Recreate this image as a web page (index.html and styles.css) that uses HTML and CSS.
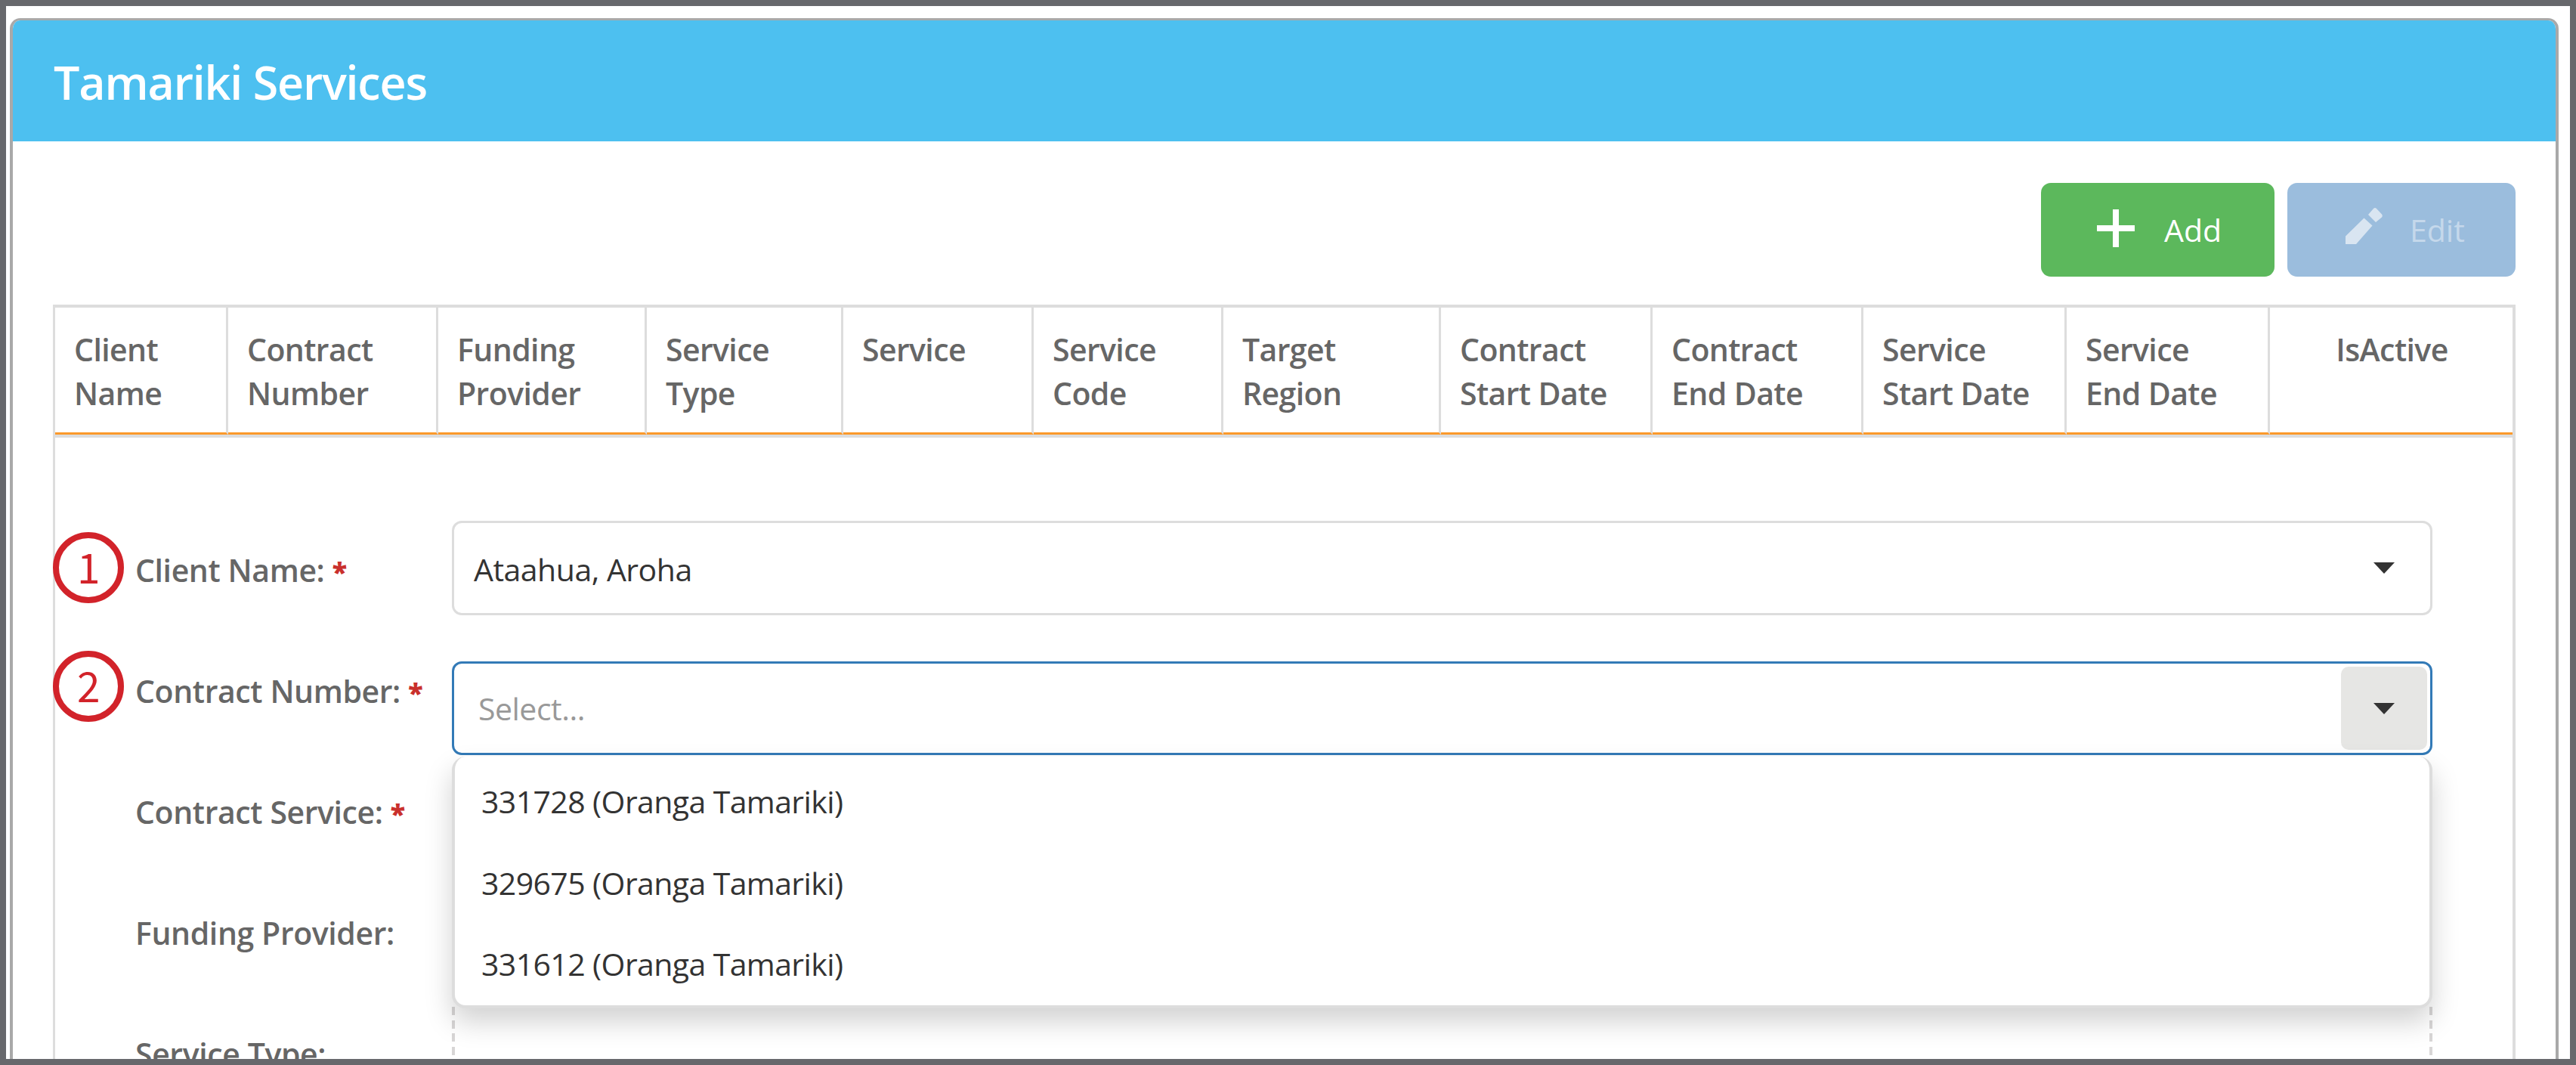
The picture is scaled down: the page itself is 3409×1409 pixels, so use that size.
FILE: index.html
```
<!DOCTYPE html>
<html lang="en">

<head>
    <meta charset="UTF-8">
    <meta name="viewport" content="width=device-width, initial-scale=1.0">
    <title>Tamariki Services</title>
    <link rel="stylesheet" href="styles.css">
</head>

<body>
    <section class="panel">
        <h1 class="panelTitle">Tamariki Services</h1>
        <div class="toolbar">
            <button class="btn addBtn">
                <svg width="50" height="50" viewBox="0 0 50 50">
                    <path d="M21 0h8v21h21v8H29v21h-8V29H0v-8h21z" fill="#fff" />
                </svg>
                <span>Add</span>
            </button>
            <button class="btn editBtn" disabled>
                <svg width="49" height="48" viewBox="0 0 49 48">
                    <path d="M0 48V37.5L24.5 13.5 35.5 23.5 14 48zM30 9l7-8q2-2 4 0l7 7.500q1.500 2 0 4L40 19z" fill="#d9e5f1" />
                </svg>
                <span>Edit</span>
            </button>
        </div>
        <div class="grid">
            <div class="gridHeader">
                <div class="gridCell">Client<br>Name</div>
                <div class="gridCell">Contract<br>Number</div>
                <div class="gridCell">Funding<br>Provider</div>
                <div class="gridCell">Service<br>Type</div>
                <div class="gridCell">Service</div>
                <div class="gridCell">Service<br>Code</div>
                <div class="gridCell">Target<br>Region</div>
                <div class="gridCell">Contract<br>Start Date</div>
                <div class="gridCell">Contract<br>End Date</div>
                <div class="gridCell">Service<br>Start Date</div>
                <div class="gridCell">Service<br>End Date</div>
                <div class="gridCell centered">IsActive</div>
            </div>
            <div class="form">
                <div class="labels">
                    <label><span class="step">1</span>Client Name: <b>*</b></label>
                    <label><span class="step stepTwo">2</span>Contract Number: <b>*</b></label>
                    <label>Contract Service: <b>*</b></label>
                    <label>Funding Provider:</label>
                    <label>Service Type:</label>
                </div>
                <div class="fields">
                    <div class="combo">
                        <span>Ataahua, Aroha</span>
                        <div class="comboBtn"><i class="caret"></i></div>
                    </div>
                    <div class="combo active">
                        <span class="placeholder">Select...</span>
                        <div class="comboBtn"><i class="caret"></i></div>
                        <ul class="dropdown">
                            <li>331728 (Oranga Tamariki)</li>
                            <li>329675 (Oranga Tamariki)</li>
                            <li>331612 (Oranga Tamariki)</li>
                        </ul>
                    </div>
                    <div class="readonlyBox"></div>
                </div>
            </div>
        </div>
    </section>
</body>

</html>
```
FILE: styles.css
```
* {
    margin: 0;
    padding: 0;
    box-sizing: border-box;
}

html {
    overflow: hidden;
}

body {
    height: 1409px;
    border: 8px solid #67686c;
    padding: 16px 15px 0 5px;
    overflow: hidden;
    background: #fff;
    color: #666;
    font-family: "Open Sans", "Noto Sans", sans-serif;
    font-size: 41px;
    letter-spacing: -.5px;
}

.panel {
    height: 1377px;
    border: 4px solid #a9a9a9;
    border-top-width: 3px;
    border-bottom: none;
    border-radius: 14px 14px 0 0;
    overflow: hidden;
}

.panelTitle {
    height: 160px;
    padding: 3px 0 0 54px;
    background: #4dc0f0;
    color: #fff;
    font-size: 61px;
    font-weight: 600;
    line-height: 158px;
    letter-spacing: -1.2px;
}

.toolbar {
    display: flex;
    justify-content: flex-end;
    gap: 17px;
    padding: 55px 53px 37px 0;
}

.btn {
    height: 124px;
    display: flex;
    align-items: center;
    border: none;
    border-radius: 13px;
    font: inherit;
    letter-spacing: 0;
}

.addBtn {
    width: 309px;
    padding-left: 74px;
    gap: 39px;
    background: #5cb85c;
    color: #fff;
}

.addBtn svg {
    margin-bottom: 4px;
}

.editBtn {
    width: 302px;
    padding-left: 77px;
    gap: 36px;
    background: #9bbddd;
    color: #c5d8eb;
}

.editBtn svg {
    margin-bottom: 10px;
}

.grid {
    height: 1000px;
    margin: 0 53px;
    border: 4px solid #ddd;
    border-left-width: 3px;
    border-bottom: none;
}

.gridHeader {
    height: 172px;
    display: grid;
    grid-template-columns: 229px 278px 276px 260px 252px 251px 288px 280px 279px 269px 269px 1fr;
    border-bottom: 4px solid #ddd;
    font-weight: 600;
    line-height: 58px;
    letter-spacing: -.6px;
}

.gridCell {
    padding: 26px 0 0 25px;
    border-right: 3px solid #ddd;
    border-bottom: 3px solid #fb992b;
}

.gridCell.centered {
    padding-left: 2px;
    border-right: none;
    text-align: center;
}

.form {
    display: flex;
    padding: 0 106px 0 105px;
}

.labels {
    width: 420px;
    padding: 95px 0 0 1px;
    font-weight: 600;
}

.labels label {
    display: block;
    position: relative;
    height: 160px;
    line-height: 160px;
    letter-spacing: -.4px;
    white-space: nowrap;
}

.labels b {
    color: #c9302c;
    font-size: 36px;
    line-height: 1;
}

.step {
    position: absolute;
    left: -109px;
    top: 30px;
    width: 94px;
    height: 94px;
    border: 8px solid #d2232a;
    border-radius: 50%;
    color: #d2232a;
    font-family: "Noto Sans CJK SC", sans-serif;
    font-size: 55px;
    font-weight: 400;
    line-height: 72px;
    text-align: center;
}

.stepTwo {
    top: 27px;
}

.fields {
    flex: 1;
    padding-top: 110px;
}

.combo {
    position: relative;
    height: 125px;
    display: flex;
    justify-content: space-between;
    align-items: center;
    padding: 0 4px 0 26px;
    border: 3px solid #ddd;
    border-radius: 13px;
    color: #333;
}

.combo > span {
    padding-top: 3px;
}

.combo.active {
    height: 124px;
    margin-top: 61px;
    padding-left: 32px;
    border-color: #337ab7;
}

.combo .placeholder {
    padding-top: 0;
    color: #999;
}

.comboBtn {
    width: 114px;
    height: 110px;
    display: flex;
    justify-content: center;
    align-items: center;
    border-radius: 10px;
}

.active .comboBtn {
    background: #e6e6e4;
}

.caret {
    border: 14px solid transparent;
    border-top: 15px solid #333;
    border-bottom: none;
}

.dropdown {
    position: absolute;
    left: -3px;
    right: -3px;
    top: 123px;
    height: 333px;
    padding-top: 6px;
    border: 4px solid #ddd;
    border-top: none;
    border-radius: 18px;
    background: #fff;
    box-shadow: 0 18px 36px rgba(0, 0, 0, .18);
    list-style: none;
}

.dropdown li {
    height: 107.5px;
    padding-left: 35px;
    line-height: 107.5px;
    letter-spacing: -.6px;
}

/* dashed sides of the disabled field under the open list */
.readonlyBox {
    height: 69px;
    margin-top: 333px;
    background: repeating-linear-gradient(#d8d6d6 0 11px, transparent 11px 17.7px) left / 4px 100% no-repeat,
        repeating-linear-gradient(#d8d6d6 0 11px, transparent 11px 17.7px) right / 4px 100% no-repeat;
}
```
